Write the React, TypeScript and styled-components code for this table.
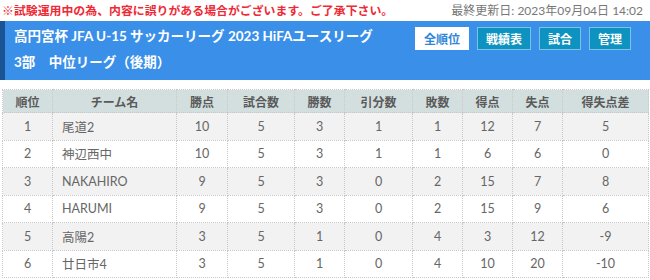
import styled, { createGlobalStyle } from "styled-components"

const GlobalStyle = createGlobalStyle`
  body {
    margin: 0;
    background: #fff;
    font-family: "Lato", "Noto Sans CJK JP", sans-serif;
  }
`

// #region styled
const Page = styled.main`
  width: 650px;
  overflow: hidden;
`

const TopBar = styled.div`
  display: flex;
  justify-content: space-between;
  align-items: center;
  height: 19px;
  padding: 0 7px 0 2px;
`

const Notice = styled.p`
  margin: 0;
  color: #ee2a36;
  font-size: 11.9px;
  font-weight: 700;
  font-family: "Noto Sans CJK JP", sans-serif;
`

const Updated = styled.p`
  margin: 0;
  color: #777;
  font-size: 12px;
`

const Header = styled.header`
  display: flex;
  justify-content: space-between;
  align-items: flex-start;
  margin-top: 2px;
  height: 59px;
  padding: 2px 19px 0 9px;
  background: #3a8fe8;
  border-left: 5px solid #1b5495;
  box-sizing: border-box;
  color: #fff;
`

const Title = styled.h1`
  margin: 0;
  font-size: 13.5px;
  font-weight: 700;
  line-height: 26px;
  font-family: "Lato", "Noto Sans CJK JP", sans-serif;
`

const Nav = styled.nav`
  display: flex;
  gap: 8px;
  margin-top: 4px;
`

const NavButton = styled.a<{ $active?: boolean }>`
  display: flex;
  align-items: center;
  height: 23px;
  padding: 0 8px;
  box-sizing: border-box;
  font-size: 12px;
  font-weight: 700;
  font-family: "Noto Sans CJK JP", sans-serif;
  background: ${(p) => (p.$active ? "#fff" : "#0e93c0")};
  color: ${(p) => (p.$active ? "#2f86d8" : "#fff")};
  border: 1px solid ${(p) => (p.$active ? "#fff" : "#7cc3e3")};
`

const Table = styled.table`
  margin: 9px 2px 0;
  width: 646px;
  border-collapse: collapse;
  table-layout: fixed;
  font-size: 12.5px;
  color: #666;

  th,
  td {
    border: 1px dotted #c8c8c8;
    text-align: center;
    padding: 0;
  }

  th {
    height: 22px;
    background: #d3dfdf;
    color: #5a5a5a;
    font-weight: 700;
    font-size: 12px;
  }

  td {
    height: 26.5px;
  }

  tbody tr:nth-child(odd) td {
    background: #f2f2f2;
  }
`

const TeamCell = styled.td`
  && {
    text-align: left;
    padding-left: 9px;
  }
`
// #endregion

const columns = [
  { label: "順位", width: 50 },
  { label: "チーム名", width: 124 },
  { label: "勝点", width: 51 },
  { label: "試合数", width: 67 },
  { label: "勝数", width: 50 },
  { label: "引分数", width: 68 },
  { label: "敗数", width: 50 },
  { label: "得点", width: 50 },
  { label: "失点", width: 50 },
  { label: "得失点差", width: 86 },
]

const rows: [number, string, number, number, number, number, number, number, number, number][] = [
  [1, "尾道2", 10, 5, 3, 1, 1, 12, 7, 5],
  [2, "神辺西中", 10, 5, 3, 1, 1, 6, 6, 0],
  [3, "NAKAHIRO", 9, 5, 3, 0, 2, 15, 7, 8],
  [4, "HARUMI", 9, 5, 3, 0, 2, 15, 9, 6],
  [5, "高陽2", 3, 5, 1, 0, 4, 3, 12, -9],
  [6, "廿日市4", 3, 5, 1, 0, 4, 10, 20, -10],
]

const App = () => {
  return (
    <Page>
      <GlobalStyle />
      <TopBar>
        <Notice>※試験運用中の為、内容に誤りがある場合がございます。ご了承下さい。</Notice>
        <Updated>最終更新日: 2023年09月04日 14:02</Updated>
      </TopBar>

      <Header>
        <Title>
          高円宮杯 JFA U-15 サッカーリーグ 2023 HiFAユースリーグ
          <br />
          3部　中位リーグ（後期）
        </Title>
        <Nav>
          <NavButton $active>全順位</NavButton>
          <NavButton>戦績表</NavButton>
          <NavButton>試合</NavButton>
          <NavButton>管理</NavButton>
        </Nav>
      </Header>

      <Table>
        <colgroup>
          {columns.map((c) => (
            <col key={c.label} style={{ width: c.width }} />
          ))}
        </colgroup>
        <thead>
          <tr>
            {columns.map((c) => (
              <th key={c.label}>{c.label}</th>
            ))}
          </tr>
        </thead>
        <tbody>
          {rows.map(([rank, team, ...stats]) => (
            <tr key={rank}>
              <td>{rank}</td>
              <TeamCell>{team}</TeamCell>
              {stats.map((s, i) => (
                <td key={i}>{s}</td>
              ))}
            </tr>
          ))}
        </tbody>
      </Table>
    </Page>
  )
}

export default App
